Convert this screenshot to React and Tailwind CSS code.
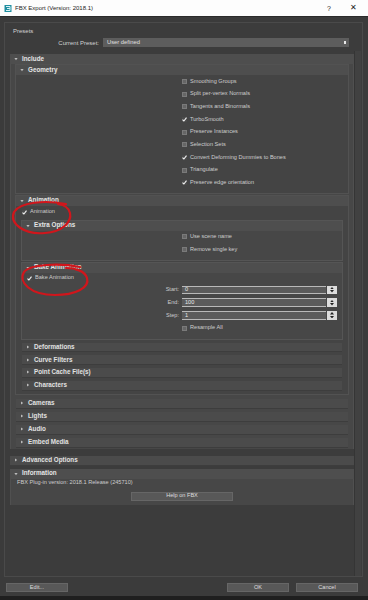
import React from "react";

function Tri({ open }) {
  return (
    <svg width="4" height="4" viewBox="0 0 4 4" className="shrink-0">
      {open ? (
        <path d="M0.4 1.1 L3.6 1.1 L2 3.3 Z" fill="#bdbdbd" />
      ) : (
        <path d="M1 0.4 L3.2 2 L1 3.6 Z" fill="#bdbdbd" />
      )}
    </svg>
  );
}

function Head({ label, open }) {
  return (
    <div className="flex items-center h-[10px] pl-[4px] gap-[4px] bg-[#4e4e4e] text-[#e6e6e6] font-bold text-[6.3px] whitespace-nowrap">
      <Tri open={open} />
      <span>{label}</span>
    </div>
  );
}

function Bar({ label, className = "" }) {
  return (
    <div className={`flex items-center pl-[4px] gap-[4px] bg-[#4b4b4b] border-b border-[#3d3d3d] text-[#e2e2e2] font-bold text-[6.3px] whitespace-nowrap ${className}`}>
      <Tri open={false} />
      <span>{label}</span>
    </div>
  );
}

function Check({ checked }) {
  return checked ? (
    <span className="w-[5px] h-[5px] shrink-0 flex items-center justify-center bg-[#4a4a4a]">
      <svg width="5" height="5" viewBox="0 0 5 5">
        <path d="M0.5 2.6 L1.9 4 L4.5 0.7" stroke="#f4f4f4" strokeWidth="1.1" fill="none" />
      </svg>
    </span>
  ) : (
    <span className="w-[5px] h-[5px] shrink-0 bg-[#666] border-[0.5px] border-[#7a7a7a]" />
  );
}

function CheckRow({ label, checked, className = "" }) {
  return (
    <div className={`flex items-center gap-[3px] text-[5.6px] text-[#cdcdcd] whitespace-nowrap ${className}`}>
      <Check checked={checked} />
      <span>{label}</span>
    </div>
  );
}

function Spin({ label, value }) {
  return (
    <div className="flex items-center h-[12.75px]">
      <span className="w-[157px] text-right text-[5.6px] text-[#cdcdcd]">{label}</span>
      <div className="ml-[3px] w-[144px] h-[8.5px] bg-[#5b5b5b] border-t border-b border-[#b9b9b9] flex items-center pl-[3px] text-[5.6px] text-[#e8e8e8]">
        {value}
      </div>
      <div className="ml-[1px] w-[10px] h-[8.5px] bg-[#dcdcdc] flex flex-col items-center justify-center gap-[1px]">
        <svg width="4" height="2.5" viewBox="0 0 4 2.5"><path d="M0 2.5 L2 0 L4 2.5 Z" fill="#222" /></svg>
        <svg width="4" height="2.5" viewBox="0 0 4 2.5"><path d="M0 0 L2 2.5 L4 0 Z" fill="#222" /></svg>
      </div>
    </div>
  );
}

const geometry = [
  ["Smoothing Groups", false],
  ["Split per-vertex Normals", false],
  ["Tangents and Binormals", false],
  ["TurboSmooth", true],
  ["Preserve Instances", false],
  ["Selection Sets", false],
  ["Convert Deforming Dummies to Bones", true],
  ["Triangulate", false],
  ["Preserve edge orientation", true],
];

function Logo() {
  return (
    <svg width="8" height="9" viewBox="0 0 8 9" className="ml-[4px] shrink-0">
      <path d="M0.5 1 L7.5 1 L7.5 8 L0.5 8 Z" fill="#1f8ea0" />
      <path d="M2 2.5 L6 2.5 L6 6.5 L2 6.5" stroke="#d9f2f5" strokeWidth="1" fill="none" />
      <path d="M3 4.5 L6 4.5" stroke="#d9f2f5" strokeWidth="1" />
    </svg>
  );
}

function Btn({ label, className = "" }) {
  return (
    <div className={`h-[9px] bg-[#585858] border border-[#666] flex items-center justify-center text-[5.6px] text-[#dedede] ${className}`}>
      {label}
    </div>
  );
}

export default function App() {
  return (
    <div className="relative w-[368px] h-[600px] overflow-hidden bg-[#3b3b3b] font-['Liberation_Sans',Arial,sans-serif] leading-none">
      {/* Title bar */}
      <div className="h-[17px] bg-[#fdfdfd] flex items-center text-[#1c1c1c] text-[6px] border-b border-[#2b2b2b]">
        <Logo />
        <span className="ml-[3px]">FBX Export (Version: 2018.1)</span>
        <span className="ml-auto w-[24px] text-center text-[7px]">?</span>
        <span className="w-[24px] mr-[3px] text-center text-[8px]">✕</span>
      </div>

      {/* Main frame */}
      <div className="mt-[5px] ml-[4px] w-[359px] h-[555px] border border-[#4a4a4a] bg-[#3c3c3c] flex flex-col">
        {/* Presets */}
        <div className="h-[28px] shrink-0">
          <div className="pl-[8px] pt-[5px] text-[6px] text-[#d2d2d2]">Presets</div>
          <div className="flex items-center mt-[4px] h-[9px]">
            <span className="w-[94px] text-right text-[6px] text-[#d2d2d2]">Current Preset:</span>
            <div className="ml-[4px] w-[246px] h-[9px] bg-[#5d5d5d] flex items-center pl-[4px] text-[5.8px] text-[#e0e0e0]">
              User defined
              <span className="ml-auto mr-[3px] w-[2.5px] h-[2.5px] bg-[#e8e8e8]" />
            </div>
          </div>
        </div>

        {/* Scroll area */}
        <div className="flex flex-1 min-h-0">
          <div className="flex-1 pl-[5px] pt-[3px]">
            {/* Include */}
            <div className="w-[344px] bg-[#474747] shadow-[inset_1px_0_0_#505050,inset_-1px_0_0_#505050] pb-[1px]">
              <Head label="Include" open />
              {/* Geometry */}
              <div className="mx-[6px] mt-[1px] bg-[#444] shadow-[0_0_0_1px_#525252]">
                <Head label="Geometry" open />
                <div className="pb-[3.4px]">
                  {geometry.map(([l, c]) => (
                    <CheckRow key={l} label={l} checked={c} className="h-[12.7px] pl-[166px]" />
                  ))}
                </div>
              </div>
              {/* Animation */}
              <div className="mx-[6px] mt-[3px] bg-[#444] shadow-[0_0_0_1px_#525252] pb-[3.5px]">
                <Head label="Animation" open />
                <CheckRow label="Animation" checked className="h-[13px] pl-[6px]" />
                <div className="mx-[6px] mt-[2px] bg-[#474747] shadow-[0_0_0_1px_#555] pb-[3.6px]">
                  <Head label="Extra Options" open />
                  <CheckRow label="Use scene name" checked={false} className="h-[12.7px] pl-[160px]" />
                  <CheckRow label="Remove single key" checked={false} className="h-[12.7px] pl-[160px]" />
                </div>
                <div className="mx-[6px] mt-[3px] bg-[#474747] shadow-[0_0_0_1px_#555] pb-[4px]">
                  <Head label="Bake Animation" open />
                  <CheckRow label="Bake Animation" checked className="h-[11px] pl-[5px]" />
                  <Spin label="Start:" value="0" />
                  <Spin label="End:" value="100" />
                  <Spin label="Step:" value="1" />
                  <CheckRow label="Resample All" checked={false} className="h-[12.75px] pl-[160px]" />
                </div>
                <div className="mx-[6px] pt-[1px]">
                  <Bar label="Deformations" className="mt-[3px] h-[9.75px]" />
                  <Bar label="Curve Filters" className="mt-[3px] h-[9.75px]" />
                  <Bar label="Point Cache File(s)" className="mt-[3px] h-[9.75px]" />
                  <Bar label="Characters" className="mt-[3px] h-[9.75px]" />
                </div>
              </div>
              <div className="mx-[6px] mt-[4.5px]">
                <Bar label="Cameras" className="h-[10px]" />
                <Bar label="Lights" className="mt-[3px] h-[10px]" />
                <Bar label="Audio" className="mt-[3px] h-[10px]" />
                <Bar label="Embed Media" className="mt-[3px] h-[10px]" />
              </div>
            </div>

            {/* Advanced Options */}
            <div className="w-[344px] mt-[7px]">
              <Bar label="Advanced Options" className="h-[10px]" />
            </div>

            {/* Information */}
            <div className="w-[344px] mt-[3px] bg-[#474747] shadow-[inset_1px_0_0_#505050,inset_-1px_0_0_#505050] pb-[4px]">
              <Head label="Information" open />
              <div className="h-[9px] flex items-center pl-[7px] text-[5.6px] text-[#cdcdcd]">
                FBX Plug-in version: 2018.1 Release (245710)
              </div>
              <div className="flex mt-[4px] pl-[121px]">
                <Btn label="Help on FBX" className="w-[102px]" />
              </div>
            </div>
          </div>
          {/* scrollbar track */}
          <div className="w-[7px] mr-[1px] bg-[#414141] border-l border-[#353535]" />
        </div>
      </div>

      {/* Buttons */}
      <div className="flex items-center mt-[6px] h-[9px]">
        <Btn label="Edit..." className="ml-[6px] w-[62px]" />
        <Btn label="OK" className="ml-[159px] w-[62px]" />
        <Btn label="Cancel" className="ml-[7px] w-[62px]" />
      </div>
      <div className="mt-[4px] h-[10px] bg-[#1f1f1f]" />

      {/* Red annotation circles */}
      <svg className="absolute inset-0 pointer-events-none" width="368" height="600" viewBox="0 0 368 600">
        <path
          d="M66 204 C45 200, 20 202, 14 212 C9 224, 25 235, 45 233 C62 232, 72 222, 70 213 C69 208, 64 205, 58 204"
          stroke="#d0161c" strokeWidth="2.2" fill="none" strokeLinecap="round"
        />
        <path
          d="M80 267 C60 263, 30 264, 24 272 C18 282, 30 295, 55 295 C75 295, 90 288, 87 278 C85 271, 75 268, 66 268"
          stroke="#d0161c" strokeWidth="2.2" fill="none" strokeLinecap="round"
        />
      </svg>
    </div>
  );
}
